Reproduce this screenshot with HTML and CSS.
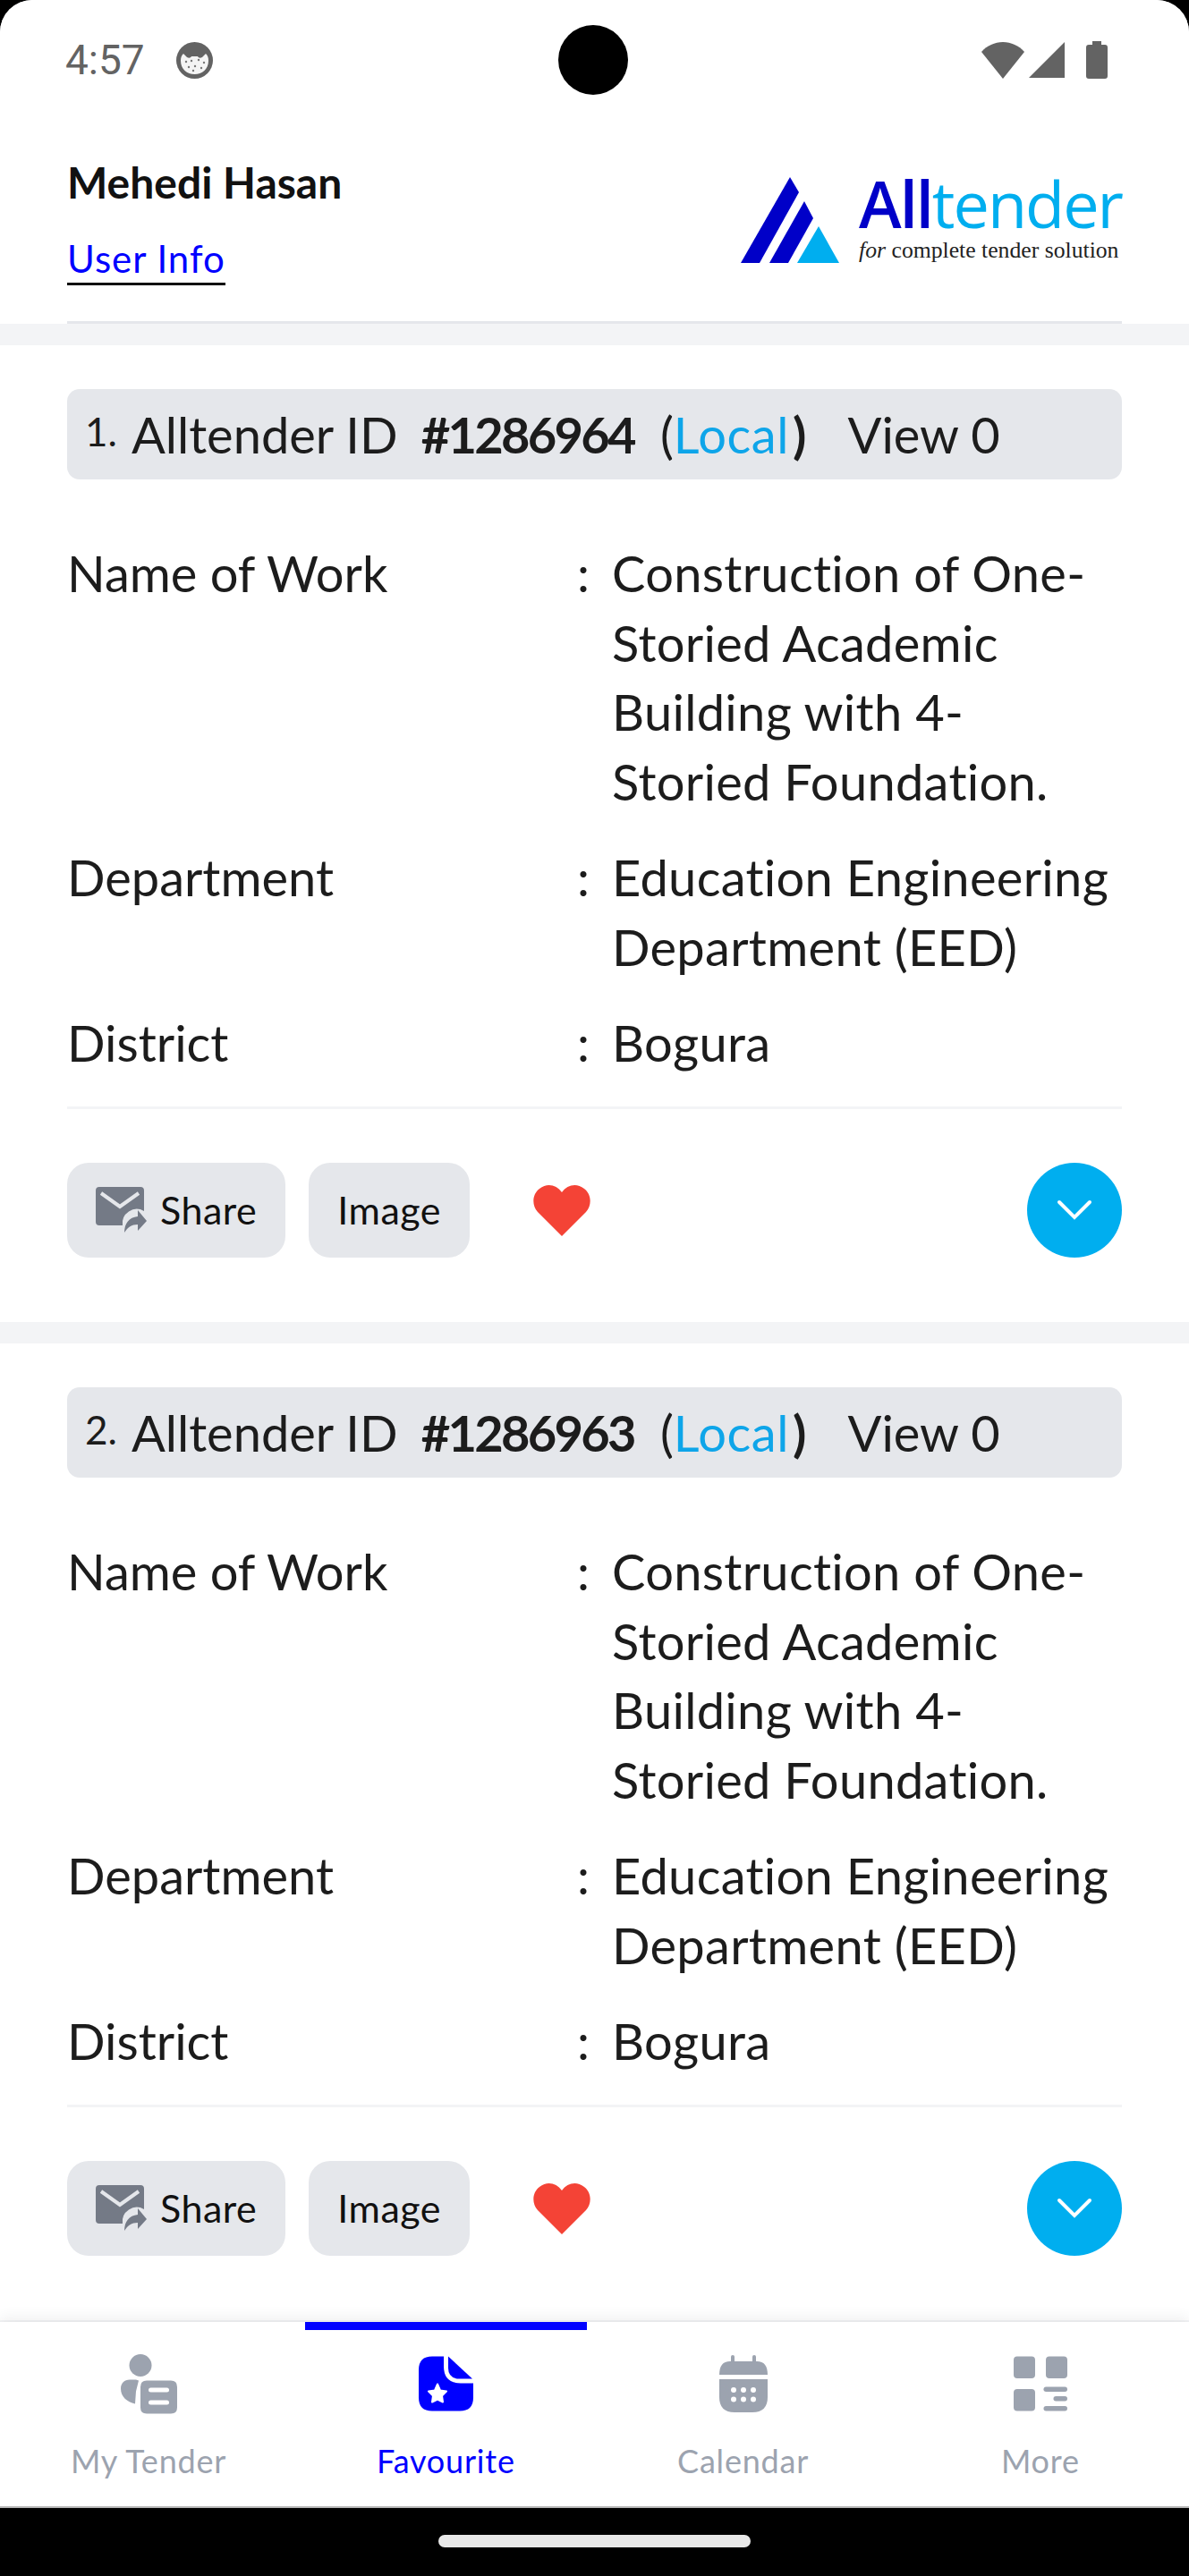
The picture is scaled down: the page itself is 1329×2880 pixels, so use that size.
FILE: index.html
```html
<!DOCTYPE html>
<html lang="en">
  <head>
    <meta charset="UTF-8" />
    <title>Alltender - Favourite</title>
    <link rel="stylesheet" href="styles.css">
  </head>
  <body>
    <div class="phone">
      <div class="status-bar">
        <div class="status-left">
          <span class="time">4:57</span>
          <svg width="41" height="41" viewBox="0 0 41 41">
            <circle cx="20.5" cy="20.5" r="20.5" fill="#636363"/>
            <path d="M5 21c0-4 1-6 3-8l4 4c2 1 4 1 5-1h7c1 2 3 2 5 1l4-4c2 2 3 4 3 8 0 9-7 15-15.5 15S5 30 5 21z" fill="#f4f4f4"/>
            <g fill="#777"><circle cx="11" cy="22" r="1.2"/><circle cx="17" cy="21" r="1.2"/><circle cx="25" cy="20" r="1.2"/><circle cx="31" cy="23" r="1.2"/><circle cx="14" cy="28" r="1.2"/><circle cx="21" cy="27" r="1.2"/><circle cx="28" cy="29" r="1.2"/><circle cx="19" cy="32" r="1.2"/></g>
          </svg>
        </div>
        <div class="camera"></div>
        <div class="status-right">
          <svg class="sig-wifi" width="48" height="41" viewBox="0 0 48 41"><path d="M0 11C6 4 15 0 24 0s18 4 24 11L24 41z" fill="#636363"/></svg>
          <svg class="sig-cell" width="40" height="40" viewBox="0 0 40 40"><path d="M40 0v40H0z" fill="#636363"/></svg>
          <svg width="24" height="42" viewBox="0 0 24 42"><path d="M7 0h10v4h4q3 0 3 3v32q0 3-3 3H3q-3 0-3-3V7q0-3 3-3h4z" fill="#636363"/></svg>
        </div>
      </div>

      <header class="top-header">
        <div class="user-block">
          <div class="user-name">Mehedi Hasan</div>
          <a class="user-link">User Info</a>
        </div>
        <div class="logo">
          <svg width="111" height="96" viewBox="0 0 111 96">
            <path d="M55 0l10 17-44 79H0z" fill="#0000c8"/>
            <path d="M71 27l10 19-28 50H32z" fill="#0000c8"/>
            <path d="M87 55l23 41H63z" fill="#00aeef"/>
          </svg>
          <div class="logo-text">
            <div class="logo-name"><span class="logo-all">All</span><span class="logo-tender">tender</span></div>
            <div class="logo-tag"><i>for</i> complete tender solution</div>
          </div>
        </div>
      </header>

      <main class="list">
        <section class="card">
          <div class="card-title">
            <span class="num">1.</span>
            <span>Alltender ID</span>
            <b class="tid">#1286964</b>
            <span class="paren">(<span class="local">Local</span><b class="close">)</b></span>
            <span class="views">View 0</span>
          </div>
          <div class="rows">
            <div class="row"><div class="label">Name of Work</div><div class="colon">:</div><div class="value">Construction of One-<br>Storied Academic<br>Building with 4-<br>Storied Foundation.</div></div>
            <div class="row"><div class="label">Department</div><div class="colon">:</div><div class="value">Education Engineering<br>Department (EED)</div></div>
            <div class="row"><div class="label">District</div><div class="colon">:</div><div class="value">Bogura</div></div>
          </div>
          <div class="actions">
            <button class="act-btn">
              <svg width="57" height="51" viewBox="0 0 57 51"><path d="M4 0h46q4 0 4 4v23a16 16 0 0 0-24 16H4q-4 0-4-4V4q0-4 4-4z" fill="#747a86"/><path d="M6 7l21 15L48 7" fill="none" stroke="#e5e7eb" stroke-width="4"/><path d="M32 51c0-10 5-17 15-18v-7l10 12-10 11v-7c-7 0-11 3-15 9z" fill="#747a86"/></svg>
              <span>Share</span>
            </button>
            <button class="act-btn">Image</button>
            <svg class="heart" width="64" height="58" viewBox="0 0 64 58"><path d="M32 58L5 31C-2 23-1 11 7 5c9-7 19-4 25 4 6-8 16-11 25-4 8 6 9 18 2 26z" fill="#f44336"/></svg>
            <div class="circle-btn"><svg width="40" height="24" viewBox="0 0 40 24"><path d="M3 3l17 17L37 3" fill="none" stroke="#fff" stroke-width="4" stroke-linecap="round"/></svg></div>
          </div>
        </section>

        <section class="card">
          <div class="card-title">
            <span class="num">2.</span>
            <span>Alltender ID</span>
            <b class="tid">#1286963</b>
            <span class="paren">(<span class="local">Local</span><b class="close">)</b></span>
            <span class="views">View 0</span>
          </div>
          <div class="rows">
            <div class="row"><div class="label">Name of Work</div><div class="colon">:</div><div class="value">Construction of One-<br>Storied Academic<br>Building with 4-<br>Storied Foundation.</div></div>
            <div class="row"><div class="label">Department</div><div class="colon">:</div><div class="value">Education Engineering<br>Department (EED)</div></div>
            <div class="row"><div class="label">District</div><div class="colon">:</div><div class="value">Bogura</div></div>
          </div>
          <div class="actions">
            <button class="act-btn">
              <svg width="57" height="51" viewBox="0 0 57 51"><path d="M4 0h46q4 0 4 4v23a16 16 0 0 0-24 16H4q-4 0-4-4V4q0-4 4-4z" fill="#747a86"/><path d="M6 7l21 15L48 7" fill="none" stroke="#e5e7eb" stroke-width="4"/><path d="M32 51c0-10 5-17 15-18v-7l10 12-10 11v-7c-7 0-11 3-15 9z" fill="#747a86"/></svg>
              <span>Share</span>
            </button>
            <button class="act-btn">Image</button>
            <svg class="heart" width="64" height="58" viewBox="0 0 64 58"><path d="M32 58L5 31C-2 23-1 11 7 5c9-7 19-4 25 4 6-8 16-11 25-4 8 6 9 18 2 26z" fill="#f44336"/></svg>
            <div class="circle-btn"><svg width="40" height="24" viewBox="0 0 40 24"><path d="M3 3l17 17L37 3" fill="none" stroke="#fff" stroke-width="4" stroke-linecap="round"/></svg></div>
          </div>
        </section>
      </main>

      <nav class="tabs">
        <div class="tab">
          <svg width="63" height="67" viewBox="0 0 63 67"><circle cx="22" cy="13" r="12.5" fill="#9ca3af"/><path d="M17 29h-7C4 29 0 33 0 39c0 9 7 15 16 17l1-14 3-12z" fill="#9ca3af"/><path d="M29 30h27q7 0 7 7v23q0 7-7 7H29q-7 0-7-7V37q0-7 7-7z" fill="#9ca3af"/><rect x="31" y="38" width="23" height="5" rx="2.5" fill="#fff"/><rect x="31" y="52" width="23" height="5" rx="2.5" fill="#fff"/></svg>
          <span>My Tender</span>
        </div>
        <div class="tab active">
          <svg width="61" height="61" viewBox="0 0 61 61"><path d="M15 0h13v11q0 19 19 19h14v16q0 15-15 15H15Q0 61 0 46V15Q0 0 15 0z" fill="#0000ff"/><path d="M33 0l27 25H46q-13 0-13-12z" fill="#0000ff"/><path d="M21 31l3 7 7 1-5 5 1 7-6-3-6 3 1-7-5-5 7-1z" fill="#fff" stroke="#fff" stroke-width="2" stroke-linejoin="round"/></svg>
          <span>Favourite</span>
        </div>
        <div class="tab">
          <svg width="54" height="64" viewBox="0 0 54 64"><rect x="13" y="0" width="4" height="10" rx="2" fill="#9ca3af"/><rect x="37" y="0" width="4" height="10" rx="2" fill="#9ca3af"/><path d="M12 7h30q12 0 12 15H0Q0 7 12 7z" fill="#9ca3af"/><path d="M0 27h54v20q0 17-17 17H17Q0 64 0 47z" fill="#9ca3af"/><g fill="#fff"><circle cx="16" cy="39" r="3"/><circle cx="27" cy="39" r="3"/><circle cx="38" cy="39" r="3"/><circle cx="16" cy="49.5" r="3"/><circle cx="27" cy="49.5" r="3"/><circle cx="38" cy="49.5" r="3"/></g></svg>
          <span>Calendar</span>
        </div>
        <div class="tab">
          <svg width="60" height="61" viewBox="0 0 60 61"><rect x="0" y="0" width="24" height="24.5" rx="4" fill="#9ca3af"/><rect x="36" y="0" width="24" height="24.5" rx="4" fill="#9ca3af"/><rect x="0" y="36.5" width="24" height="24.5" rx="4" fill="#9ca3af"/><rect x="33.5" y="34" width="26.5" height="5.5" rx="2.7" fill="#9ca3af"/><rect x="44.5" y="44.5" width="15.5" height="5.5" rx="2.7" fill="#9ca3af"/><rect x="33.5" y="55.5" width="26.5" height="5.5" rx="2.7" fill="#9ca3af"/></svg>
          <span>More</span>
        </div>
      </nav>

      <div class="gesture-bar"><div class="gesture-pill"></div></div>
    </div>
  </body>
</html>
```

FILE: styles.css
```css
* {
  box-sizing: border-box;
  font-family: Lato, "Noto Sans", sans-serif;
  font-variant-ligatures: none;
}

html {
  background: #000;
}

body {
  margin: 0;
  padding: 0;
  background: #000;
}

.phone {
  width: 1329px;
  height: 2880px;
  background: #f3f4f6;
  display: flex;
  flex-direction: column;
  overflow: hidden;
  border-radius: 36px 36px 0 0;
}

.status-bar {
  height: 132px;
  background: #fff;
  display: flex;
  align-items: flex-start;
  padding: 28px 91px 0 73px;
}

.status-left {
  display: flex;
  align-items: center;
  gap: 35px;
  height: 78px;
  width: 551px;
}

.time {
  font-family: Roboto, sans-serif;
  font-size: 46px;
  color: #636363;
}

.camera {
  width: 78px;
  height: 78px;
  border-radius: 50%;
  background: #000;
}

.status-right {
  flex: 1;
  display: flex;
  justify-content: flex-end;
  align-items: center;
  height: 78px;
}

.sig-cell {
  margin-left: 5px;
  margin-right: 24px;
}

.top-header {
  background: #fff;
  height: 230px;
  display: flex;
  justify-content: space-between;
  padding: 0 75px;
  position: relative;
}

.top-header::after {
  content: "";
  position: absolute;
  left: 75px;
  right: 75px;
  bottom: 0;
  height: 3px;
  background: #e5e7eb;
}

.user-block {
  padding-top: 44px;
}

.user-name {
  font-size: 48px;
  font-weight: 700;
  color: #111;
  line-height: 56px;
}

.user-link {
  display: inline-block;
  margin-top: 30px;
  font-size: 42px;
  line-height: 54px;
  color: #0000ff;
  border-bottom: 3px solid #111;
  letter-spacing: 1px;
}

.logo {
  display: flex;
  align-items: flex-start;
  gap: 21px;
  padding-top: 66px;
}

.logo-text {
  display: flex;
  flex-direction: column;
  margin-top: -8px;
}

.logo-name {
  font-family: "Open Sans", sans-serif;
  font-size: 72px;
  line-height: 74px;
  letter-spacing: -2px;
}

.logo-all {
  font-family: inherit;
  font-weight: 600;
  color: #0000c8;
}

.logo-tender {
  font-family: inherit;
  color: #00aeef;
}

.logo-tag {
  font-family: "Liberation Serif", serif;
  font-size: 25.7px;
  line-height: 30px;
  color: #222;
  padding-top: 1px;
}

.logo-tag i {
  font-family: inherit;
}

.list {
  flex: 1;
  min-height: 0;
  display: flex;
  flex-direction: column;
  gap: 24px;
  padding-top: 24px;
  overflow: hidden;
}

.card {
  background: #fff;
  padding: 49px 75px 0;
  height: 1092px;
  flex-shrink: 0;
}

.card-title {
  height: 101px;
  background: #e5e7eb;
  border-radius: 14px;
  display: flex;
  align-items: center;
  padding: 0 20px;
  font-size: 56px;
  color: #1c1c1c;
  white-space: nowrap;
}

.num {
  font-size: 44px;
  margin-right: 16px;
  position: relative;
  top: -4px;
}

.tid {
  margin-left: 26px;
  font-weight: 700;
  letter-spacing: -2.7px;
}

.paren {
  margin-left: 29px;
}

.local {
  color: #0ea5e9;
  letter-spacing: 0.6px;
}

.close {
  margin-left: 4px;
}

.views {
  margin-left: 46px;
}

.rows {
  padding-top: 66px;
  display: flex;
  flex-direction: column;
  gap: 30px;
  border-bottom: 3px solid #f3f4f6;
  padding-bottom: 32px;
}

.row {
  display: flex;
  font-size: 56px;
  line-height: 77.5px;
  color: #1c1c1c;
}

.label {
  width: 570px;
  flex-shrink: 0;
}

.colon {
  width: 39px;
  flex-shrink: 0;
}

.value {
  flex: 1;
  white-space: nowrap;
  letter-spacing: 0.3px;
}

.actions {
  display: flex;
  align-items: center;
  gap: 26px;
  padding-top: 60px;
}

.act-btn {
  height: 106px;
  padding: 0 32px;
  border: none;
  border-radius: 24px;
  background: #e5e7eb;
  font-size: 43px;
  color: #111;
  display: flex;
  align-items: center;
  gap: 15px;
  letter-spacing: 0.5px;
}

.act-btn span {
  font-size: 43px;
}

.heart {
  margin-left: 45px;
}

.circle-btn {
  margin-left: auto;
  width: 106px;
  height: 106px;
  border-radius: 50%;
  background: #00aeef;
  display: flex;
  align-items: center;
  justify-content: center;
}

.tabs {
  height: 206px;
  background: #fff;
  display: flex;
  flex-shrink: 0;
  box-shadow: 0 -6px 14px rgba(0, 0, 0, 0.06);
  position: relative;
}

.tab {
  width: 25%;
  display: flex;
  flex-direction: column;
  align-items: center;
  padding-top: 26px;
  font-size: 36px;
  color: #9ca3af;
  border-top: 9px solid transparent;
}

.tab svg {
  height: 68px;
}

.tab span {
  margin-top: 30px;
  line-height: 44px;
  letter-spacing: 0.8px;
}

.tab.active {
  color: #0000ff;
  border-top-color: #0000ff;
  margin: 0 9px;
  width: calc(25% - 18px);
}

.gesture-bar {
  height: 78px;
  background: #000;
  border-top: 2px solid #b8b8b8;
  display: flex;
  justify-content: center;
  padding-top: 30px;
  flex-shrink: 0;
}

.gesture-pill {
  width: 349px;
  height: 14px;
  border-radius: 7px;
  background: #e8e8e8;
}
```
